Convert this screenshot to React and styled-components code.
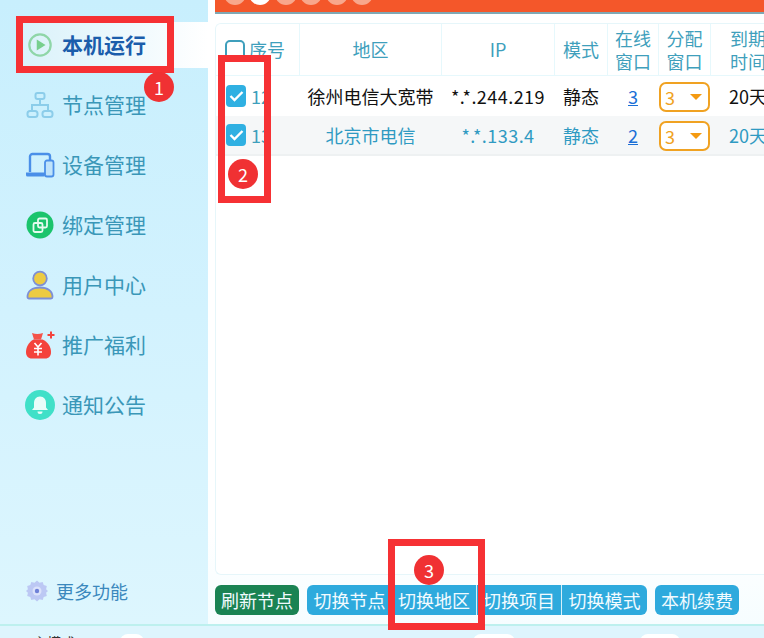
import React from 'react'
import styled, { createGlobalStyle } from 'styled-components'

const GlobalStyle = createGlobalStyle`
html, body {
  margin: 0;
  padding: 0;
  overflow: hidden;
  background: #fff;
}
* { box-sizing: border-box; }
`

const COLUMNS = '83px 141px 112px 52px 50px 51px 74px'

const Page = styled.div`
position: relative;
width: 764px;
height: 638px;
overflow: hidden;
font-family: "Noto Sans CJK SC", "Noto Sans", sans-serif;
background: #fff;
`

const Body = styled.div`
display: flex;
height: 626px;
border-bottom: 2px solid #bdf0ee;
`

const Sidebar = styled.div`
width: 208px;
flex-shrink: 0;
display: flex;
flex-direction: column;
padding: 22px 0 20px;
gap: 14px;
background: linear-gradient(180deg, #c8effd 0%, #d2f2fe 50%, #ddf6fe 100%);
`

const NavItem = styled.div`
height: 46px;
margin-left: 16px;
padding-left: 10px;
display: flex;
align-items: center;
gap: 8px;
font-size: 21px;
font-weight: ${props => (props.$active ? 700 : 400)};
color: ${props => (props.$active ? '#1b5dab' : '#3a97b8')};
background: ${props => (props.$active ? 'linear-gradient(90deg, #d8f1fa 0%, #ffffff 100%)' : 'transparent')};
`

const IconSlot = styled.span`
width: 28px;
flex-shrink: 0;
display: flex;
justify-content: center;
`

const NavLabel = styled.span`
margin-bottom: 2px;
`

const MoreRow = styled.div`
margin-top: auto;
padding-left: 25px;
display: flex;
align-items: center;
gap: 7px;
font-size: 18px;
line-height: 26px;
color: #3b88bd;
`

const Main = styled.div`
flex: 1;
min-width: 0;
display: flex;
flex-direction: column;
padding-left: 7px;
background: linear-gradient(180deg, #ffffff 0%, #ffffff 85%, #f6fdff 100%);
`

const TopBar = styled.div`
height: 14px;
flex-shrink: 0;
display: flex;
align-items: flex-end;
gap: 3.4px;
padding: 0 0 7px 9px;
overflow: hidden;
background: #f4572a;
border-bottom: 2px solid #7fa8b4;
`

const Step = styled.span`
width: 22px;
height: 22px;
flex-shrink: 0;
border-radius: 50%;
display: flex;
align-items: center;
justify-content: center;
font-size: 12px;
color: ${props => (props.$active ? '#222' : '#b0503a')};
background: ${props => (props.$active ? '#fff' : '#f8a78c')};
`

const Card = styled.div`
height: 552px;
margin-top: 9px;
flex-shrink: 0;
border: 1px solid #e6f6fa;
border-right: 0;
border-radius: 6px 0 0 6px;
overflow: hidden;
background: #fff;
`

const HeadRow = styled.div`
display: grid;
grid-template-columns: ${COLUMNS};
column-gap: 1px;
height: 52px;
background: #e6f8fc;
border-bottom: 1px solid #e6f8fc;
`

const HeadCell = styled.div`
display: flex;
align-items: center;
justify-content: ${props => (props.$left ? 'flex-start' : 'center')};
padding-left: ${props => (props.$left ? '9px' : '0')};
gap: 4px;
font-size: 18px;
line-height: 23px;
text-align: center;
color: #3f9fbc;
background: #fff;
`

const HeadBox = styled.span`
width: 20px;
height: 20px;
border: 2px solid #3f9fbc;
border-radius: 5px;
`

const Row = styled.div`
display: grid;
grid-template-columns: ${COLUMNS};
column-gap: 1px;
height: 40px;
font-size: 18px;
color: ${props => (props.$active ? '#2f9ac2' : '#111')};
background: ${props => (props.$active ? '#f5f7f8' : '#fff')};
border-bottom: ${props => (props.$active ? '2px solid #eef1f2' : '0')};
`

const Cell = styled.div`
display: flex;
align-items: center;
justify-content: ${props => (props.$left ? 'flex-start' : 'center')};
padding-left: ${props => (props.$left ? '10px' : '0')};
gap: 5px;
white-space: nowrap;
`

const IpText = styled.span`
letter-spacing: 0.45px;
`

const Check = styled.span`
width: 20px;
height: 22px;
border-radius: 4px;
display: flex;
align-items: center;
justify-content: center;
background: #2fb0e2;
`

const Num = styled.span`
color: #3f9fbc;
`

const CountLink = styled.a`
color: #1a6fd6;
text-decoration: underline;
`

const Select = styled.div`
width: 51px;
height: 30px;
margin-top: 1px;
display: flex;
align-items: center;
justify-content: space-between;
padding: 0 6px 0 4px;
border: 2px solid #f0a222;
border-radius: 7px;
color: #f0a222;
background: #fff;
`

const Caret = styled.span`
width: 0;
height: 0;
border-left: 6px solid transparent;
border-right: 6px solid transparent;
border-top: 6px solid #f49a12;
`

const Actions = styled.div`
display: flex;
gap: 8px;
margin-top: 10px;
`

const ButtonGroup = styled.div`
display: flex;
border-radius: 6px;
overflow: hidden;
`

const Button = styled.div`
width: ${props => (props.$wide ? '85px' : '84px')};
height: 30px;
display: flex;
align-items: center;
justify-content: center;
font-size: 18px;
color: #f2fbff;
border-radius: ${props => (props.$grouped ? '0' : '6px')};
background: ${props => (props.$green ? '#1a8353' : '#2eaadd')};
border-right: ${props => (props.$divider ? '1px solid #d5f0fa' : '0')};
`

const BottomBar = styled.div`
height: 12px;
display: flex;
padding: 7px 0 0 33px;
font-size: 14px;
line-height: 18px;
color: #333;
background: #def5fd;
`

const Pill = styled.span`
width: ${props => props.$w}px;
height: 20px;
margin-top: 1px;
margin-left: ${props => props.$gap}px;
flex-shrink: 0;
border-radius: 8px;
background: #fff;
`

const Annotation = styled.div`
position: absolute;
left: ${props => props.$x}px;
top: ${props => props.$y}px;
width: ${props => props.$w}px;
height: ${props => props.$h}px;
border: 7px solid #f63134;
`

const Badge = styled.div`
position: absolute;
left: ${props => props.$x}px;
top: ${props => props.$y}px;
width: 30px;
height: 30px;
border-radius: 50%;
display: flex;
align-items: center;
justify-content: center;
font-size: 18px;
color: #fff;
background: #f03133;
`

const PlayIcon = () => (
  <svg width="26" height="26" viewBox="0 0 28 28">
    <circle cx="14" cy="14" r="11.5" fill="none" stroke="#8fd6a8" strokeWidth="2.4" />
    <path d="M10.5 8 L20 14 L10.5 20 Z" fill="#77cf8e" />
  </svg>
)

const TreeIcon = () => (
  <svg width="28" height="28" viewBox="0 0 28 28" fill="none" stroke="#8ccdea" strokeWidth="2">
    <rect x="9.5" y="2" width="9" height="6" rx="2" />
    <path d="M14 8v6M6 20v-6h16v6" />
    <rect x="1.5" y="20" width="10" height="6" rx="2.5" />
    <rect x="16.5" y="20" width="10" height="6" rx="2.5" />
  </svg>
)

const DeviceIcon = () => (
  <svg width="30" height="26" viewBox="0 0 30 26" style={{ flexShrink: 0 }}>
    <path d="M5 20V4.5A2.5 2.5 0 0 1 7.5 2h15A2.5 2.5 0 0 1 25 4.5V8" fill="none" stroke="#4a8fe8" strokeWidth="2.4" />
    <path d="M1 20.5h19v2.5a1.5 1.5 0 0 1-1.5 1.5h-16A1.5 1.5 0 0 1 1 23z" fill="#4a8fe8" />
    <rect x="20" y="8.5" width="8.5" height="16" rx="2" fill="#bfe3fa" stroke="#4a8fe8" strokeWidth="1.8" />
  </svg>
)

const BindIcon = () => (
  <svg width="28" height="28" viewBox="0 0 28 28" fill="none">
    <circle cx="14" cy="14" r="13.5" fill="#1bc46c" />
    <rect x="12" y="7.5" width="9" height="9" rx="1.5" stroke="#e4fbee" strokeWidth="1.8" />
    <rect x="7.5" y="12" width="9" height="9" rx="1.5" stroke="#e4fbee" strokeWidth="1.8" />
  </svg>
)

const UserIcon = () => (
  <svg width="28" height="30" viewBox="0 0 28 30">
    <circle cx="14" cy="8.5" r="6.8" fill="#eccb43" stroke="#7d8fd6" strokeWidth="1.8" />
    <path d="M1.5 27c0-6 5-9.5 12.5-9.5S26.5 21 26.5 27c0 .8-.7 1.5-1.5 1.5H3c-.8 0-1.5-.7-1.5-1.5z" fill="#eccb43" stroke="#7d8fd6" strokeWidth="1.8" />
  </svg>
)

const BagIcon = () => (
  <svg width="30" height="30" viewBox="0 0 30 30" style={{ flexShrink: 0 }}>
    <path d="M7 3c3.500 1.200 7 1.200 11 0l-2 6.500h-7z" fill="#f4544a" />
    <path d="M8.500 9.500h9C23 12 26 17 26 22c0 4-2 6.500-6 6.500H7c-4 0-6-2.500-6-6.500 0-5 3-10 7.500-12.500z" fill="#f4433c" />
    <path d="M9.500 13l3.500 4 3.500-4M9 18.500h8M9 22h8M13 17v8.500" fill="none" stroke="#fff" strokeWidth="1.6" />
    <path d="M26 1.500v7M22.500 5h7" stroke="#f4433c" strokeWidth="2" />
  </svg>
)

const BellIcon = () => (
  <svg width="30" height="30" viewBox="0 0 30 30" style={{ flexShrink: 0 }}>
    <circle cx="15" cy="15" r="15" fill="#40e0c8" />
    <path d="M15 6.5c-4 0-6 3-6 6.500v4.500l-2 2.500h16l-2-2.500V13c0-3.500-2-6.500-6-6.500z" fill="#e9fdf9" />
    <path d="M12.500 21.500h5a2.500 2.500 0 0 1-5 0z" fill="#e9fdf9" />
  </svg>
)

const GearIcon = () => (
  <svg width="24" height="24" viewBox="0 0 24 24">
    <path d="M12 1.500l2.500 2.200 3.200-.7 1 3.100 3.100 1-.7 3.200L23 12l-1.900 1.700.7 3.200-3.100 1-1 3.100-3.200-.7L12 22.500l-2.500-2.200-3.200.7-1-3.100-3.100-1 .7-3.200L1 12l1.900-1.700-.7-3.200 3.100-1 1-3.100 3.200.7z" fill="#bcc8f4" />
    <circle cx="12" cy="12" r="4.5" fill="#dbe2fb" />
    <circle cx="12" cy="12" r="2.2" fill="#6f80d8" />
  </svg>
)

const CheckMark = () => (
  <svg width="15" height="12" viewBox="0 0 15 12" fill="none">
    <path d="M1.5 6l4 4 8-8" stroke="#fff" strokeWidth="2.4" />
  </svg>
)

const navItems = [
  { label: '本机运行', icon: <PlayIcon />, active: true },
  { label: '节点管理', icon: <TreeIcon /> },
  { label: '设备管理', icon: <DeviceIcon /> },
  { label: '绑定管理', icon: <BindIcon /> },
  { label: '用户中心', icon: <UserIcon /> },
  { label: '推广福利', icon: <BagIcon /> },
  { label: '通知公告', icon: <BellIcon /> },
]

const rows = [
  { no: 12, region: '徐州电信大宽带', ip: '*.*.244.219', online: 3 },
  { no: 13, region: '北京市电信', ip: '*.*.133.4', online: 2, active: true },
]

const App = () => {
  return (
    <Page>
      <GlobalStyle />
      <Body>
        <Sidebar>
          {navItems.map(item => (
            <NavItem key={item.label} $active={item.active}>
              <IconSlot>{item.icon}</IconSlot>
              <NavLabel>{item.label}</NavLabel>
            </NavItem>
          ))}
          <MoreRow>
            <GearIcon />
            更多功能
          </MoreRow>
        </Sidebar>
        <Main>
          <TopBar>
            {[1, 2, 3, 4, 5, 6].map(n => (
              <Step key={n} $active={n === 2}>{n}</Step>
            ))}
          </TopBar>
          <Card>
            <HeadRow>
              <HeadCell $left><HeadBox />序号</HeadCell>
              <HeadCell>地区</HeadCell>
              <HeadCell>IP</HeadCell>
              <HeadCell>模式</HeadCell>
              <HeadCell>在线<br />窗口</HeadCell>
              <HeadCell>分配<br />窗口</HeadCell>
              <HeadCell>到期<br />时间</HeadCell>
            </HeadRow>
            {rows.map(row => (
              <Row key={row.no} $active={row.active}>
                <Cell $left><Check><CheckMark /></Check><Num>{row.no}</Num></Cell>
                <Cell>{row.region}</Cell>
                <Cell><IpText>{row.ip}</IpText></Cell>
                <Cell>静态</Cell>
                <Cell><CountLink>{row.online}</CountLink></Cell>
                <Cell><Select>3<Caret /></Select></Cell>
                <Cell>20天</Cell>
              </Row>
            ))}
          </Card>
          <Actions>
            <Button $green>刷新节点</Button>
            <ButtonGroup>
              <Button $grouped $wide>切换节点</Button>
              <Button $grouped $wide $divider>切换地区</Button>
              <Button $grouped $wide $divider>切换项目</Button>
              <Button $grouped $wide>切换模式</Button>
            </ButtonGroup>
            <Button>本机续费</Button>
          </Actions>
        </Main>
      </Body>
      <BottomBar>
        主模式
        <Pill $w={24} $gap={45} />
        <Pill $w={42} $gap={329} />
        <Pill $w={40} $gap={125} />
      </BottomBar>
      <Annotation $x={16} $y={16} $w={158} $h={57} />
      <Badge $x={144} $y={72}>1</Badge>
      <Annotation $x={218} $y={55} $w={53} $h={148} />
      <Badge $x={228} $y={159}>2</Badge>
      <Annotation $x={388} $y={539} $w={97} $h={91} />
      <Badge $x={414} $y={555}>3</Badge>
    </Page>
  )
}

export default App
